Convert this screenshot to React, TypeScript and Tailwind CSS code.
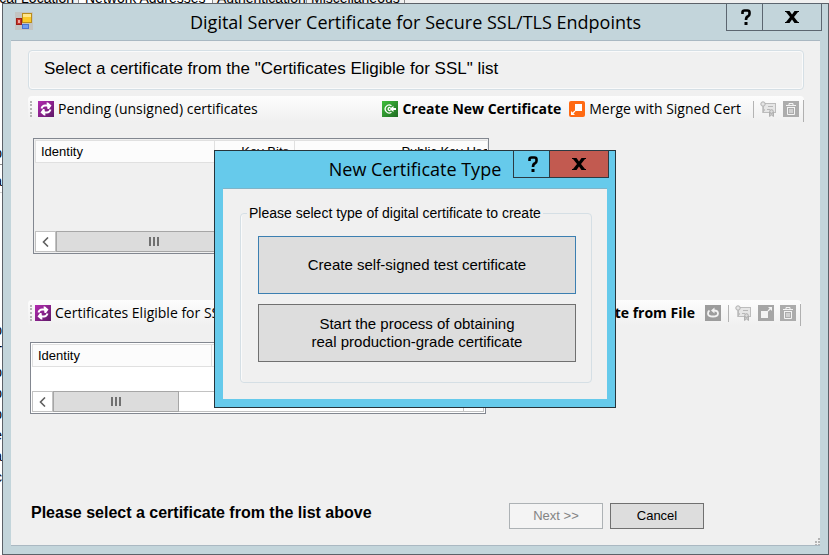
import type { ReactNode } from "react";

const SEGOE = "font-['Open_Sans',sans-serif]";

function RefreshIcon() {
  return (
    <svg width="16" height="16" viewBox="0 0 16 16" className="shrink-0">
      <defs>
        <linearGradient id="purple" x1="0" y1="0" x2="1" y2="1">
          <stop offset="0" stopColor="#b32bb0" />
          <stop offset="1" stopColor="#5f1a68" />
        </linearGradient>
      </defs>
      <rect width="16" height="16" fill="url(#purple)" />
      <path d="M3.500 7.500Q4.500 4.500 7 4.500H10M12.500 8.500Q11.500 11.500 9 11.500H6" fill="none" stroke="#fff" strokeWidth="2" />
      <path d="M8.500 1.500H10L13.500 4.500L11 8H9.500zM7.500 14.500H6L2.500 11.500L5 8H6.500z" fill="#fff" />
    </svg>
  );
}

function CreateIcon() {
  return (
    <svg width="16" height="16" viewBox="0 0 16 16" className="shrink-0">
      <defs>
        <linearGradient id="green" x1="0" y1="0" x2="1" y2="1">
          <stop offset="0" stopColor="#3fbf3c" />
          <stop offset="1" stopColor="#1f6b22" />
        </linearGradient>
      </defs>
      <rect width="16" height="16" fill="url(#green)" />
      <path d="M9.500 4.700A4 4 0 1 0 9.500 11.300M8.500 6.800A1.500 1.500 0 1 0 8.500 9.200" fill="none" stroke="#fff" strokeWidth="1.300" />
      <path d="M7.500 8L11.500 5V7H14V9H11.500V11z" fill="#fff" />
    </svg>
  );
}

function MergeIcon() {
  return (
    <svg width="16" height="16" viewBox="0 0 16 16" className="shrink-0">
      <rect width="16" height="16" rx="2" fill="#ff6a13" />
      <rect x="6" y="3" width="7" height="7" fill="#fff" />
      <path d="M2 10L6 14H2z" fill="#fff" />
      <path d="M3.500 12.500L6 10" stroke="#fff" strokeWidth="1.200" />
    </svg>
  );
}

function CertIcon() {
  return (
    <svg width="17" height="16" viewBox="0 0 17 16" className="shrink-0">
      <rect x="3.500" y="2.500" width="12" height="9" fill="#e6e6e6" stroke="#bcbcbc" />
      <path d="M8 5.500H13M7 8.500H10" stroke="#b8b8b8" />
      <circle cx="3" cy="3" r="2.200" fill="#e4e4e4" stroke="#b0b0b0" />
      <path d="M3 5V12M3 9H5" stroke="#bababa" strokeWidth="1.500" />
      <path d="M9.500 11V15.500L11.500 14L13.500 15.500V11" fill="#c8c8c8" stroke="#b0b0b0" />
      <circle cx="11.500" cy="10.500" r="1.800" fill="#dcdcdc" stroke="#acacac" />
    </svg>
  );
}

function TrashIcon() {
  return (
    <svg width="16" height="16" viewBox="0 0 16 16" className="shrink-0">
      <rect width="16" height="16" fill="#acacac" />
      <path d="M3 4.500H13M6 4V2.500H10V4M4.500 6V13.500H11.500V6M4 6.500H12" fill="none" stroke="#f4f4f4" />
      <path d="M7 8V12M9 8V12" stroke="#f4f4f4" />
    </svg>
  );
}

function ReloadIcon() {
  return (
    <svg width="16" height="16" viewBox="0 0 16 16" className="shrink-0">
      <rect width="16" height="16" fill="#9c9c9c" />
      <path d="M4.500 5.500Q3 6.500 3 8.500Q3 11.500 8 11.500T13 8.500Q13 5.500 9 5.500" fill="none" stroke="#f2f2f2" strokeWidth="1.800" />
      <path d="M9.500 2.500V8.500L6 5.500z" fill="#f2f2f2" />
    </svg>
  );
}

function ExportIcon() {
  return (
    <svg width="16" height="16" viewBox="0 0 16 16" className="shrink-0">
      <rect width="16" height="16" fill="#a6a6a6" />
      <rect x="3" y="6" width="7" height="7" fill="#f4f4f4" />
      <path d="M10 2H14V6z" fill="#f4f4f4" />
      <path d="M10 6L12.500 3.500" stroke="#f4f4f4" strokeWidth="1.200" />
    </svg>
  );
}

function FormIcon() {
  return (
    <svg width="18" height="18" viewBox="0 0 18 18" className="shrink-0">
      <rect width="18" height="18" fill="#c3c4c2" />
      <rect x="7.500" y="1.500" width="9" height="9" fill="#fbc928" stroke="#b98e1c" />
      <rect x="8" y="2" width="8" height="3" fill="#ffe68a" />
      <rect x="1.500" y="6.500" width="5" height="6" fill="#c8352b" stroke="#9c1f18" />
      <rect x="3" y="8" width="2" height="3" fill="#f0a8a0" />
      <rect x="7.500" y="12.500" width="6" height="4" fill="#6f9df0" stroke="#4a74cf" />
    </svg>
  );
}

function CaptionButtons({ active }: { active?: boolean }) {
  return (
    <div className={`mr-1.5 -mt-px flex h-7 justify-self-end border ${active ? "border-[#2b3a42]" : "border-[#5c6670]"}`}>
      <button type="button" aria-label="Help" className="grid w-[35px] place-items-center pl-[3px]">
        <svg width="10" height="16" viewBox="0 0 10 16">
          <path d="M1.500 5V3.500Q1.500 1.500 3.500 1.500H6.500Q8.500 1.500 8.500 3.500V5Q8.500 6.500 7 7.200Q5 8 5 11" fill="none" stroke="#000" strokeWidth="2.600" />
          <rect x="3.500" y="13" width="3" height="3" />
        </svg>
      </button>
      <button
        type="button"
        aria-label="Close"
        className={`grid w-[59px] place-items-center border-l ${active ? "border-[#2b3a42] bg-[#c25a50]" : "border-[#5c6670]"}`}
      >
        <svg width="14" height="12" viewBox="0 0 14 12">
          <path d="M0 0H4.500L7 3.500L9.500 0H14V1H13L9 6L13 11H14V12H9.500L7 8.500L4.500 12H0V11H1L5 6L1 1H0z" />
        </svg>
      </button>
    </div>
  );
}

function Separator() {
  return <span className="h-[17px] w-px bg-[#b4b4b4]" />;
}

function Toolbar({ children }: { children: ReactNode }) {
  return (
    <div className={`flex h-[26px] items-center rounded-sm bg-linear-to-b from-[#fdfdfd] to-[#f0f0f0] text-sm leading-5 whitespace-nowrap ${SEGOE}`}>
      <span className="ml-0.5 h-4 border-l-2 border-dotted border-[#b4b4b4]" />
      {children}
      <span className="mt-1 h-[22px] w-px bg-[#b0b0b0]" />
    </div>
  );
}

function CertList({ label, tall }: { label: string; tall?: boolean }) {
  return (
    <div className={`flex w-[456px] flex-col border border-[#828790] p-px ${tall ? "h-29 bg-[#f0f0f0]" : "h-18 bg-white"}`}>
      <div className="flex-1 overflow-hidden">
        <table aria-label={label} className="w-[486px] table-fixed border-collapse text-[13px]">
          <thead>
            <tr className="h-[22px] bg-[#fcfcfc]">
              <th className="w-[179px] border border-[#e0e0e0] px-[5px] text-left font-normal">Identity</th>
              <th className="w-20 border border-[#e0e0e0] px-[5px] text-right font-normal">Key Bits</th>
              <th className="border border-[#e0e0e0] px-4 text-right font-normal">Public Key Usage</th>
            </tr>
          </thead>
          <tbody />
        </table>
      </div>
      <div className="flex h-[21px] border border-[#c2c2c2] bg-white">
        <button type="button" aria-label="Scroll left" className="grid w-5 place-items-center border-r border-[#c2c2c2]">
          <svg width="7" height="10" viewBox="0 0 7 10">
            <path d="M6 0.500L1.500 5L6 9.500" fill="none" stroke="#606060" strokeWidth="1.600" />
          </svg>
        </button>
        <div className={`-my-px flex items-center justify-center gap-0.5 border border-[#a6a6a6] bg-[#dcdcdc] ${tall ? "w-[196px]" : "w-[126px]"}`}>
          <span className="h-[9px] w-0.5 bg-[#707070]" />
          <span className="h-[9px] w-0.5 bg-[#707070]" />
          <span className="h-[9px] w-0.5 bg-[#707070]" />
        </div>
        <button type="button" aria-label="Scroll right" className="ml-auto grid w-5 place-items-center border-l border-[#c2c2c2]">
          <svg width="7" height="10" viewBox="0 0 7 10">
            <path d="M1 0.500L5.500 5L1 9.500" fill="none" stroke="#606060" strokeWidth="1.600" />
          </svg>
        </button>
      </div>
    </div>
  );
}

function BackgroundTabs() {
  return (
    <div className="flex h-[3px] items-end overflow-hidden bg-[#f0f0f0] text-sm leading-[10px] whitespace-nowrap">
      <span className="flex w-[79px] justify-end border-r border-[#8a8a8a] pr-1">ical Location</span>
      <span className="w-[134px] border-r border-[#8a8a8a] bg-white pl-1.5">Network Addresses</span>
      <span className="w-[94px] border-r border-[#8a8a8a] pl-1">Authentication</span>
      <span className="w-[98px] border-r border-[#8a8a8a] pl-1">Miscellaneous</span>
    </div>
  );
}

function BackgroundEdge() {
  return (
    <div className="flex w-0.5 shrink-0 flex-col overflow-hidden bg-white text-sm leading-[21px]">
      <span className="mt-[140px] flex justify-end border-b border-[#8a8a8a]">p</span>
      <span className="mt-1.5 flex justify-end border-b border-[#d0d0d0]">a</span>
      <span className="mt-[127px] flex justify-end">p</span>
      <span className="flex justify-end">T</span>
      <span className="flex justify-end">p</span>
      <span className="flex justify-end">p</span>
      <span className="flex justify-end">p</span>
      <span className="flex justify-end">e</span>
      <span className="flex justify-end">a</span>
      <span className="flex justify-end">c</span>
    </div>
  );
}

function NewCertificateDialog() {
  return (
    <div
      role="dialog"
      aria-labelledby="dialog-title"
      className="absolute top-[150px] left-[214px] w-[402px] border border-[#26343b] bg-[#66caeb]"
    >
      <div className="grid h-[37px] grid-cols-[1fr_auto_1fr] items-start">
        <span />
        <h2 id="dialog-title" className={`mt-1.5 text-lg leading-6 whitespace-nowrap ${SEGOE}`}>
          New Certificate Type
        </h2>
        <CaptionButtons active />
      </div>
      <div className="mx-2 mb-2 border-t border-[#7fb4c8] bg-[#f0f0f0] pt-4 pr-[15px] pb-4 pl-[17px]">
        <fieldset className="flex flex-col gap-2.5 rounded-sm border border-[#d5dfe5] pr-[15px] pb-5 pl-[17px] shadow-[inset_1px_0_0_#fafafa]">
          <legend className="-ml-[11px] px-0.5 text-sm leading-4">Please select type of digital certificate to create</legend>
          <button type="button" className="mt-[15px] h-[58px] border border-[#3c7fb1] bg-[#dddddd] text-[15px]">
            Create self-signed test certificate
          </button>
          <button type="button" className="h-[58px] border border-[#707070] bg-[#dddddd] text-[15px] leading-[18px]">
            Start the process of obtaining
            <br />
            real production-grade certificate
          </button>
        </fieldset>
      </div>
    </div>
  );
}

export default function App() {
  return (
    <div className="relative flex min-h-screen flex-col bg-white font-['Liberation_Sans',Arial,sans-serif] text-black">
      <BackgroundTabs />
      <div className="flex flex-1">
        <BackgroundEdge />
        <main className="flex flex-1 flex-col border border-[#5c6168] bg-[#c3d5db]">
          <header className="grid h-9 grid-cols-[1fr_auto_1fr] items-start">
            <span className="mt-2 ml-3">
              <FormIcon />
            </span>
            <h1 className={`mt-1.5 text-lg leading-6 whitespace-nowrap ${SEGOE}`}>
              Digital Server Certificate for Secure SSL/TLS Endpoints
            </h1>
            <CaptionButtons />
          </header>

          <div className="mx-2 mb-2 flex flex-1 flex-col border-y border-[#aab8c2] bg-[#f0f0f0] pl-[17px]">
            <p className="mt-[9px] mr-4 rounded-sm border border-[#d5dfe5] px-[15px] pt-[7px] pb-[9px] text-[17px] leading-[22px] shadow-[inset_0_0_0_1px_#fafafa]">
              Select a certificate from the "Certificates Eligible for SSL" list
            </p>

            <div className="mt-1.5 mr-4">
              <Toolbar>
                <button type="button" className="ml-1.5 flex items-center gap-1">
                  <RefreshIcon />
                  Pending (unsigned) certificates
                </button>
                <button type="button" className="ml-auto flex items-center gap-1 font-bold">
                  <CreateIcon />
                  Create New Certificate
                </button>
                <button type="button" className="ml-2 flex items-center gap-1">
                  <MergeIcon />
                  Merge with Signed Cert
                </button>
                <div className="ml-3 mr-1 flex items-center gap-1.5">
                  <Separator />
                  <button type="button" aria-label="View certificate" disabled>
                    <CertIcon />
                  </button>
                  <button type="button" aria-label="Delete" disabled>
                    <TrashIcon />
                  </button>
                </div>
              </Toolbar>
            </div>
            <div className="mt-4 ml-[5px]">
              <CertList label="Pending certificates" tall />
            </div>

            <div className="mt-[46px] mr-[19px]">
              <Toolbar>
                <button type="button" className="ml-[3px] flex items-center gap-1">
                  <RefreshIcon />
                  Certificates Eligible for SSL
                </button>
                <button type="button" className="ml-auto font-bold">
                  Import Certificate from File
                </button>
                <button type="button" aria-label="Reload" disabled className="ml-2.5">
                  <ReloadIcon />
                </button>
                <div className="ml-[7px] mr-1 flex items-center gap-1.5">
                  <Separator />
                  <button type="button" aria-label="View certificate" disabled>
                    <CertIcon />
                  </button>
                  <button type="button" aria-label="Export" disabled>
                    <ExportIcon />
                  </button>
                  <button type="button" aria-label="Delete" disabled>
                    <TrashIcon />
                  </button>
                </div>
              </Toolbar>
            </div>
            <div className="mt-4 ml-0.5">
              <CertList label="Certificates eligible for SSL" />
            </div>

            <footer className="mt-auto flex items-end pl-[3px]">
              <p className="mb-4 flex-1 pb-1.5 text-base leading-5 font-bold">Please select a certificate from the list above</p>
              <div className="mr-[109px] mb-4 flex gap-[7px] text-[13px]">
                <button type="button" disabled className="h-[26px] w-[94px] border border-[#adb2b5] bg-[#f4f4f4] text-[#838383]">
                  Next &gt;&gt;
                </button>
                <button type="button" className="h-[26px] w-[94px] border border-[#707070] bg-[#dddddd]">
                  Cancel
                </button>
              </div>
              <svg width="7" height="7" viewBox="0 0 7 7" className="shrink-0" fill="#b4b4b4">
                <path d="M5 0h2v2h-2zM5 3h2v2h-2zM2 3h2v2h-2zM5 6h2v1h-2zM2 6h2v1h-2z" />
              </svg>
            </footer>
          </div>
        </main>
      </div>
      <NewCertificateDialog />
    </div>
  );
}
